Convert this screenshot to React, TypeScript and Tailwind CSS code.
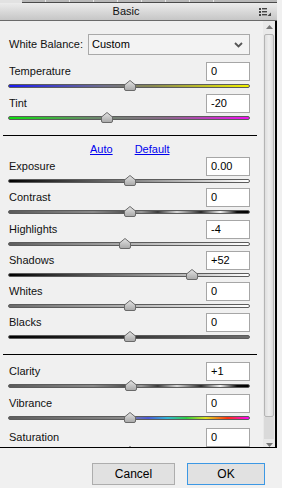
import React from "react";

type Row = {
  label: string;
  value: string;
  pos: number;
  track: string;
  gap: string;
};

const font = { fontFamily: '"Liberation Sans", Arial, sans-serif' };

function Thumb({ left }: { left: number }) {
  return (
    <svg
      width="12"
      height="11"
      viewBox="0 0 12 11"
      className="absolute top-[-5px]"
      style={{ left: left - 6 }}
    >
      <defs>
        <linearGradient id="tg" x1="0" y1="0" x2="0" y2="1">
          <stop offset="0" stopColor="#e4e4e4" />
          <stop offset="1" stopColor="#a8a8a8" />
        </linearGradient>
      </defs>
      <path d="M6 0.5 L11.5 5 L11.5 9 Q11.5 10.5 10 10.5 L2 10.5 Q0.5 10.5 0.5 9 L0.5 5 Z" fill="url(#tg)" stroke="#6a6a6a" strokeWidth="1" />
    </svg>
  );
}

function SliderRow({ label, value, pos, track, gap }: Row) {
  return (
    <div className={`flex w-[242px] shrink-0 flex-col ${gap}`}>
      <div className="flex h-[19px] shrink-0 items-center justify-between">
        <span className="pl-[1px] text-[11px] text-[#111]">{label}</span>
        <div className="flex h-[19px] w-[44px] items-center border border-[#a6a6a6] bg-white pl-[4px] text-[11px] text-black">
          {value}
        </div>
      </div>
      <div className={`relative mt-[3px] h-[4px] w-[242px] shrink-0 rounded-full border border-[#5c5c5c] ${track}`}>
        <Thumb left={pos - 8} />
      </div>
    </div>
  );
}

const contrast =
  "bg-[linear-gradient(to_right,#5a5a5a_0%,#8a8a8a_35%,#555_48%,#9a9a9a_55%,#3a3a3a_62%,#d8d8d8_70%,#2a2a2a_80%,#f4f4f4_88%,#0a0a0a_95%,#000_100%)]";

const group1: Row[] = [
  { label: "Temperature", value: "0", pos: 129, track: "bg-[linear-gradient(to_right,#1c1cf2,#6f6f8a_40%,#8a8a50_60%,#f2f200)]", gap: "mb-[6px]" },
  { label: "Tint", value: "-20", pos: 106, track: "bg-[linear-gradient(to_right,#10e010,#6a8a6a_35%,#8a6a8a_65%,#f010f0)]", gap: "mb-[6px]" },
];

const group2: Row[] = [
  { label: "Exposure", value: "0.00", pos: 129, track: "bg-[linear-gradient(to_right,#000,#fff)]", gap: "mb-[5px]" },
  { label: "Contrast", value: "0", pos: 129, track: contrast, gap: "mb-[6px]" },
  { label: "Highlights", value: "-4", pos: 124, track: "bg-[linear-gradient(to_right,#5e5e5e,#fff)]", gap: "mb-[5px]" },
  { label: "Shadows", value: "+52", pos: 191, track: "bg-[linear-gradient(to_right,#000,#fff)]", gap: "mb-[5px]" },
  { label: "Whites", value: "0", pos: 129, track: "bg-[linear-gradient(to_right,#6a6a6a,#fff)]", gap: "mb-[5px]" },
  { label: "Blacks", value: "0", pos: 129, track: "bg-[linear-gradient(to_right,#000,#6e6e6e)]", gap: "mb-[5px]" },
];

const group3: Row[] = [
  { label: "Clarity", value: "+1", pos: 130, track: contrast, gap: "mb-[6px]" },
  {
    label: "Vibrance",
    value: "0",
    pos: 129,
    track: "bg-[linear-gradient(to_right,#5e5e5e,#8a8a8a_48%,#4a5ad8_58%,#30b8d8_66%,#30d040_74%,#e0e020_82%,#ff3010_91%,#ff00ff)]",
    gap: "mb-[8px]",
  },
  { label: "Saturation", value: "0", pos: 129, track: "bg-[linear-gradient(to_right,#777,#ccc)]", gap: "mb-[6px]" },
];

export default function App() {
  return (
    <div className="flex h-[488px] w-[282px] flex-col overflow-hidden bg-[#f0f0f0]" style={font}>
      {/* tab strip */}
      <div className="flex h-[3px] w-[277px] shrink-0">
        <div className="w-[22px] bg-[#e2e2e2]" />
        <div className="flex flex-1 border-b border-[#4a4a4a] bg-[#b8b8b8]">
          {Array.from({ length: 8 }).map((_, i) => (
            <div key={i} className="w-[24px] border-r border-[#e6e6e6]" />
          ))}
        </div>
      </div>

      {/* header */}
      <div className="flex h-[18px] w-[277px] shrink-0 items-center border-b border-[#6a6a6a] bg-[linear-gradient(to_bottom,#ececec,#c6c6c6)]">
        <div className="flex-1 text-center text-[11px] text-[#111]">Basic</div>
        <div className="flex w-[25px] items-center justify-center">
          <svg width="12" height="8" viewBox="0 0 12 8">
            <rect x="0" y="0" width="2" height="2" fill="#444" />
            <rect x="0" y="3" width="2" height="2" fill="#444" />
            <rect x="0" y="6" width="2" height="2" fill="#444" />
            <rect x="3" y="0" width="5" height="1.4" fill="#444" />
            <rect x="3" y="3" width="5" height="1.4" fill="#444" />
            <rect x="3" y="6" width="5" height="1.4" fill="#444" />
            <path d="M12 4.5 L12 8 L8.5 8 Z" fill="#444" />
          </svg>
        </div>
      </div>

      {/* panel body */}
      <div className="flex h-[427px] w-[277px] shrink-0 overflow-hidden border-r-2 border-b border-black">
        <div className="flex w-[263px] flex-col pl-[8px] pt-[13px]">
          <div className="flex h-[21px] shrink-0 items-center">
            <span className="w-[80px] pl-[1px] text-[11px] text-[#111]">White Balance:</span>
            <div className="flex h-[21px] w-[162px] items-center justify-between border border-[#a9a9a9] bg-[#f3f3f3] pl-[3px] pr-[6px] text-[11px] text-black">
              <span>Custom</span>
              <svg width="9" height="6" viewBox="0 0 9 6">
                <path d="M1 1 L4.5 4.5 L8 1" fill="none" stroke="#555" strokeWidth="1.8" />
              </svg>
            </div>
          </div>

          <div className="mt-[7px] flex shrink-0 flex-col">
            {group1.map((r) => (
              <SliderRow key={r.label} {...r} />
            ))}
          </div>

          <div className="mt-[9px] ml-[-5px] h-[1px] w-[254px] shrink-0 bg-black" />

          <div className="flex h-[21px] shrink-0 items-center gap-[22px] pl-[82px] pt-[6px] text-[11px] text-[#0000ee] underline">
            <span>Auto</span>
            <span>Default</span>
          </div>

          <div className="flex shrink-0 flex-col">
            {group2.map((r) => (
              <SliderRow key={r.label} {...r} />
            ))}
          </div>

          <div className="mt-[10px] ml-[-5px] h-[1px] w-[254px] shrink-0 bg-black" />

          <div className="mt-[7px] flex shrink-0 flex-col">
            {group3.map((r) => (
              <SliderRow key={r.label} {...r} />
            ))}
          </div>
        </div>

        {/* scrollbar */}
        <div className="flex w-[12px] flex-col items-center bg-[#e9e9e9] pt-[4px]">
          <svg className="shrink-0" width="7" height="4" viewBox="0 0 7 4">
            <path d="M3.5 0 L7 4 L0 4 Z" fill="#777" />
          </svg>
          <div className="mt-[5px] h-[383px] w-[10px] shrink-0 rounded-[2px] border border-[#b4b4b4] bg-[linear-gradient(to_right,#dedede,#eeeeee,#d8d8d8)]" />
          <div className="h-[22px] w-[10px] shrink-0 bg-[#dadada]" />
          <svg className="mt-[4px] shrink-0" width="7" height="4" viewBox="0 0 7 4">
            <path d="M0 0 L7 0 L3.5 4 Z" fill="#777" />
          </svg>
        </div>
      </div>

      {/* buttons */}
      <div className="mt-[15px] flex shrink-0 gap-[12px] pl-[92px]">
        <button className="h-[22px] w-[83px] border border-[#adadad] bg-[#e1e1e1] text-[12px] text-black">
          Cancel
        </button>
        <button className="h-[22px] w-[78px] border border-[#3c98e4] bg-[#e1e1e1] text-[12px] text-black">
          OK
        </button>
      </div>
    </div>
  );
}
